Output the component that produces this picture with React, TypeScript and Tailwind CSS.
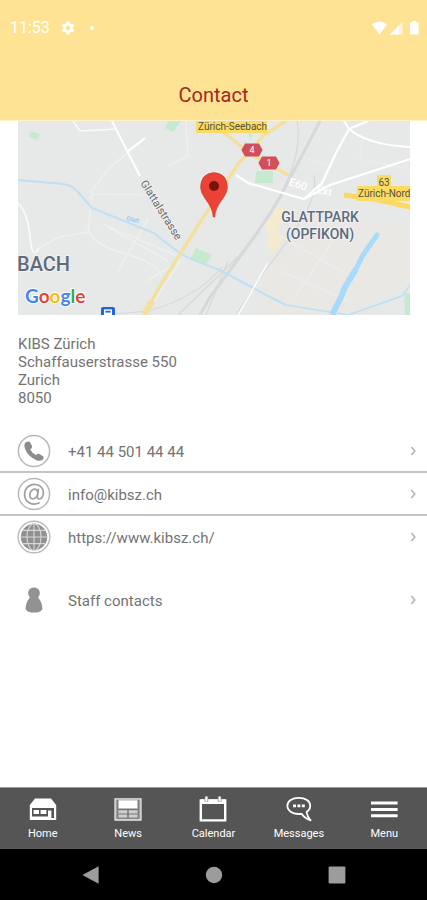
import type { ReactNode } from "react";
import { MdSettings } from "react-icons/md";

const contacts = [
  { label: "+41 44 501 44 44", href: "tel:+41445014444", icon: <PhoneIcon /> },
  { label: "info@kibsz.ch", href: "mailto:info@kibsz.ch", icon: <AtIcon /> },
  { label: "https://www.kibsz.ch/", href: "https://www.kibsz.ch/", icon: <GlobeIcon /> },
];

const tabs = [
  { label: "Home", icon: <HomeIcon /> },
  { label: "News", icon: <NewsIcon /> },
  { label: "Calendar", icon: <CalendarIcon /> },
  { label: "Messages", icon: <MessagesIcon /> },
  { label: "Menu", icon: <MenuIcon /> },
];

function PhoneIcon() {
  return (
    <svg viewBox="0 0 34 34" className="size-[34px]" aria-hidden="true">
      <circle cx="17" cy="17" r="15.6" fill="none" stroke="#b8b8b8" strokeWidth="1.5" />
      <path
        d="M8.4 8.6 11 7.4Q12.6 7.2 13.4 8.8L15 12Q15.4 13.4 14.4 14.4L13.2 15.6Q15 19 18.8 21L20.4 20Q21.4 19.4 22.4 20L26 22.2Q27 23 26.6 24.2L25.4 26Q23 27.4 20 26.4 11.4 23.2 8 14.8 6.6 10.8 8.4 8.6Z"
        fill="#8c8c8c"
      />
    </svg>
  );
}

function AtIcon() {
  return (
    <svg viewBox="0 0 34 34" className="size-[34px]" fill="none" aria-hidden="true">
      <circle cx="17" cy="17" r="15.6" stroke="#b8b8b8" strokeWidth="1.5" />
      <g stroke="#a0a0a0" strokeWidth="1.7" strokeLinecap="round">
        <path d="M22 26C15 29 7.6 25 7.6 17.4 7.6 11.4 12 7.4 17.6 7.4 23 7.4 26.4 11 26.4 15.6 26.4 19.6 24.4 22 22.4 22 20.6 22 20.2 20.8 20.4 19L21.4 12.4" />
        <path d="M20.8 15.6C20.6 13.4 19.4 12.2 17.6 12.2 14.8 12.2 12.8 15 12.8 18 12.8 20.4 14 21.8 15.8 21.8 18 21.8 20 19.8 20.4 18" />
      </g>
    </svg>
  );
}

function GlobeIcon() {
  return (
    <svg viewBox="0 0 34 34" className="size-[34px]" fill="none" aria-hidden="true">
      <circle cx="17" cy="17" r="15.8" stroke="#bcbcbc" strokeWidth="1.5" />
      <circle cx="17" cy="17" r="13.2" fill="#909090" />
      <g stroke="#d8d8d8" strokeWidth="1.1">
        <path d="M17 3.5V30.5M3.5 17H30.5M5.6 10.4H28.4M5.6 23.6H28.4" />
        <ellipse cx="17" cy="17" rx="7" ry="13.4" />
      </g>
    </svg>
  );
}

function PersonIcon() {
  return (
    <svg viewBox="0 0 34 34" className="size-[34px]" fill="#929292" aria-hidden="true">
      <path d="M17 4.6C20.4 4.6 22.8 7 22.8 10 22.8 12 22 13.4 20.8 14.6 23.4 16.6 25.2 21 25.4 25.4 25.4 28.2 21 29.6 17 29.6 13 29.6 8.6 28.2 8.6 25.4 8.8 21 10.6 16.6 13.2 14.6 12 13.4 11.2 12 11.2 10 11.2 7 13.6 4.6 17 4.6Z" />
    </svg>
  );
}

function HomeIcon() {
  return (
    <svg viewBox="0 0 28 26" className="h-[26px] w-7" aria-hidden="true">
      <path d="M6 2.6H22L27.2 9V24H.8V9Z" fill="#fff" />
      <path d="M3 12H25V22H22.4V14.4H19V20.6H3Z" fill="#555" />
      <path d="M4.6 14H10V18H4.6ZM11.6 14H17.4V18H11.6Z" fill="#fff" />
    </svg>
  );
}

function NewsIcon() {
  return (
    <svg viewBox="0 0 28 26" className="h-[26px] w-7" aria-hidden="true">
      <path d="M1 2.8H27V24H1Z" fill="#a0a0a0" stroke="#e6e6e6" strokeWidth="1.3" />
      <path d="M4.4 4.4H23.6V12.4H4.4Z" fill="#fff" />
      <path d="M4.4 14.6H13V21.8H4.4ZM15 14.6H23.6V21.8H15Z" fill="#cfcfcf" />
      <path d="M3.8 3.8V22.2H24.2V3.8M3.8 13.4H24.2M14 13.4V22.2M4.4 18H23.6" fill="none" stroke="#747474" />
    </svg>
  );
}

function CalendarIcon() {
  return (
    <svg viewBox="0 0 28 26" className="h-[26px] w-7" fill="none" aria-hidden="true">
      <path d="M1.8 4.4H26.2V24.4H1.8Z" stroke="#fff" strokeWidth="2.4" />
      <path d="M2 3.4H26V8H2Z" fill="#fff" />
      <path d="M7.4 .4V5.6M20.6 .4V5.6" stroke="#777" strokeWidth="3.6" />
      <path d="M7.4 .6V5.2M20.6 .6V5.2" stroke="#fff" strokeWidth="2.2" />
    </svg>
  );
}

function MessagesIcon() {
  return (
    <svg viewBox="0 0 28 26" className="h-[26px] w-7" fill="none" aria-hidden="true">
      <path
        d="M13.8 1.8C20.4 1.8 25.2 5 25.2 9.8 25.2 12.4 23.8 14.6 21.6 16 22 19.2 23.4 21.8 25.6 24.4 21.6 23.2 18.6 20.8 16.6 17.8 8.4 18.8 2.4 15.2 2.4 9.8 2.4 5 7.2 1.8 13.8 1.8Z"
        stroke="#fff"
        strokeWidth="1.8"
        strokeLinejoin="round"
      />
      <path d="M8 8.4H11V11.2H8ZM12.4 8.4H15.4V11.2H12.4ZM16.8 8.4H19.8V11.2H16.8Z" fill="#fff" />
    </svg>
  );
}

function MenuIcon() {
  return (
    <svg viewBox="0 0 28 26" className="h-[26px] w-7" aria-hidden="true">
      <path d="M1 7H27.6M1 13.4H27.6M1 19.8H27.6" stroke="#fff" strokeWidth="3" />
    </svg>
  );
}

function Chevron() {
  return (
    <svg viewBox="0 0 8 12" className="h-3 w-2" fill="none" aria-hidden="true">
      <path d="M2.4 2 5.8 6 2.4 10" stroke="#b0b0b0" strokeWidth="1.5" />
    </svg>
  );
}

function StatusBar() {
  return (
    <div className="flex h-14 items-center pl-2.5 pr-2 text-white">
      <span className="text-base">11:53</span>
      <MdSettings className="ml-2.5 size-4" aria-hidden="true" />
      <span className="ml-3.5 size-1 rounded-full bg-white" />
      <svg viewBox="0 0 48 14" className="ml-auto h-3.5 w-12" fill="#fff" aria-hidden="true">
        <path d="M1 3.4Q8.500-2.600 16 3.4L8.500 13.6Z" />
        <path d="M19 13.6 31.600.6V13.6Z" opacity=".6" />
        <path d="M19 13.6 28 4.4V13.6Z" />
        <path d="M41.4 0H45V1.4H47.6V13.6H39V1.4H41.4Z" />
      </svg>
    </div>
  );
}

function Shield({ x, y, label }: { x: number; y: number; label: string }) {
  return (
    <g transform={`translate(${x} ${y})`}>
      <path d="M-7-6.400H7L10.600 0 7 6.400H-7L-10.600 0Z" fill="#d0505a" />
      <text y="3.400" textAnchor="middle" fontSize="9" fill="#fff">
        {label}
      </text>
    </g>
  );
}

function ContactMap() {
  return (
    <svg viewBox="0 0 392 194" className="block w-full" role="img" aria-label="Map of KIBS Zürich" fontFamily="Roboto, sans-serif">
      <rect width="392" height="194" fill="#e7e8e8" />
      {/* built-up areas and parks */}
      <path d="M259 90 392 104V160L330 194H240L252 130Z" fill="#e9e8e5" />
      <path d="M259 84 266 88 264 98 258 110 265 118 256 132 248 124 252 112 246 104 254 96Z" fill="#f4ebcf" />
      <path d="M12 10 22 13 19 19 11 16ZM150 0H163L155 11 147 7ZM238 50H255V62H237ZM178 127 194 134 188 143 172 138ZM230 12 235 14 232 19ZM386 172H392V194H387Z" fill="#c6ead0" />
      {/* minor streets */}
      <g fill="none" stroke="#f0f1f1" strokeWidth="1.2">
        <path d="M72 72 92 46 125 20M0 82Q10 92 12 116T21 127L41 116 70 111 74 73 130 74M72 111Q76 124 108 133T143 156M85 103 157 134M130 98 100 150M128 160 162 140 130 190M92 107 150 140M168 0 170 35 150 45" />
        <path d="M262 150 330 180M262 115 340 160M277 176 316 118M345 15 342 38 392 48M285 36 308 44" opacity=".6" />
        <path d="M55 0 62 10 99 8M0 82Q10 92 12 116T21 127" stroke="#fafafa" strokeWidth="1.6" />
      </g>
      {/* railway */}
      <g fill="none" stroke="#d6d8d9" strokeWidth="3">
        <path d="M302 0Q276 50 262 76T192 176L182 194" />
        <path d="M279 0Q284 25 270 58T220 136L160 194M296 54Q300 72 284 98T248 148L218 194" strokeWidth="1.2" />
        <path d="M204 146Q180 176 130 190L85 194M210 140 188 194" strokeWidth="1.2" />
      </g>
      {/* water */}
      <g fill="none" stroke="#bfdff5" strokeWidth="2">
        <path d="M0 59 45 63Q54 64 60 71L74 87 136 112Q158 130 167 135T202 149L250 175 268 184" />
        <path d="M268 184 330 194 384 175 392 164" strokeWidth="1.6" />
        <path d="M359 114 345 134 338 148" stroke="#a8daFB" strokeWidth="5" strokeLinecap="round" />
        <path d="M338 148 327 166 323 176 314 194" stroke="#a8dafb" strokeWidth="6" />
      </g>
      {/* main roads */}
      <g fill="none" stroke="#fff">
        <path d="M94 0Q104 20 122 55M110 30 127 17" strokeWidth="2" />
        <path d="M218 54 230 62 286 78 312 64 392 38M286 78 304 62 318 32 331 8 326 0M331 8Q350 24 392 26M331 8 350 0" strokeWidth="2.2" />
        <path d="M250 142 220 194" strokeWidth="1.4" />
      </g>
      <g fill="none" stroke="#f4e09c">
        <path d="M126 194 142 165 167 125 192 86 220 43 246 14 268 0M204 10 234 34 270 54" strokeWidth="3.4" />
        <path d="M126 194 134 180" strokeWidth="6" />
        <path d="M326 74 356 78 392 86" stroke="#fbd95f" strokeWidth="5" />
      </g>
      <g fontSize="11" fill="#fff" fontWeight="500">
        <text transform="translate(270 64) rotate(18)">E60</text>
        <text transform="translate(298 72) rotate(12)">Ext</text>
      </g>
      <path d="M178-1H249V12H178ZM359 54H373V66H359ZM339 65H392V80H339Z" fill="#fadc64" />
      <g fontSize="10" fill="#55503a">
        <text x="180" y="9">Zürich-Seebach</text>
        <text x="366" y="65" textAnchor="middle">63</text>
        <text x="340" y="76">Zürich-Nord</text>
      </g>
      <Shield x={234} y={29} label="4" />
      <Shield x={251} y={42} label="1" />
      <text transform="translate(122 62) rotate(58)" fontSize="11" fill="#66696c" stroke="#f0f0f0" strokeWidth="2" paintOrder="stroke">
        Glattalstrasse
      </text>
      <g fill="#5f6b7d" fontWeight="500" stroke="#f2f2f2" strokeWidth="2" paintOrder="stroke">
        <text x="-1" y="150" fontSize="20">BACH</text>
        <g fontSize="14" textAnchor="middle">
          <text x="302" y="101">GLATTPARK</text>
          <text x="302" y="118">(OPFIKON)</text>
        </g>
      </g>
      <text x="108" y="99" transform="rotate(14 108 99)" fontSize="6" fill="#7cbdf0">
        Glatt
      </text>
      <text x="7" y="182" fontSize="19" fontWeight="700" stroke="#fff" strokeWidth="2" paintOrder="stroke" fontFamily="Lato, sans-serif">
        <tspan fill="#4285f4">G</tspan>
        <tspan fill="#ea4335">o</tspan>
        <tspan fill="#fbbc05">o</tspan>
        <tspan fill="#4285f4">g</tspan>
        <tspan fill="#34a853">l</tspan>
        <tspan fill="#ea4335">e</tspan>
      </text>
      {/* train stop */}
      <rect x="83" y="186" width="14" height="12" rx="2" fill="#2265d8" />
      <path d="M86 188.400H94V194H86Z" fill="#fff" />
      <path d="M87.400 189.800H92.600V191.600H87.400Z" fill="#2265d8" />
      {/* pin */}
      <path d="M196 51.6Q209 52.6 209.4 66C209 77 197.5 82 196.8 96H195.2C194.5 82 183 77 182.6 66Q183 52.6 196 51.6Z" fill="#ea4335" stroke="#c5352b" strokeWidth=".6" />
      <circle cx="196" cy="65" r="5" fill="#7a120d" />
    </svg>
  );
}

function ContactRow({ href, icon, children }: { href: string; icon: ReactNode; children: ReactNode }) {
  return (
    <a href={href} className="flex h-[41px] items-center pl-[17px] pr-2.5">
      {icon}
      <span className="ml-[17px] flex-1 pt-[3px] text-[15px]">{children}</span>
      <Chevron />
    </a>
  );
}

export default function App() {
  return (
    <div className="flex min-h-screen flex-col bg-white font-[Roboto,sans-serif] text-[#737373]">
      <header className="h-[121px] border-b border-[#fff1ca] bg-[#ffe395]">
        <StatusBar />
        <h1 className="mt-6 text-center text-xl leading-[30px] text-[#a5281b]">Contact</h1>
      </header>

      <main className="flex-1">
        <div className="pl-[18px] pr-[17px]">
          <ContactMap />
          <address className="mt-5 text-[15px] leading-[18px] not-italic">
            KIBS Zürich
            <br />
            Schaffauserstrasse 550
            <br />
            Zurich
            <br />
            8050
          </address>
        </div>

        <ul className="mt-[23px] divide-y-2 divide-[#c4c4c4]">
          {contacts.map((c) => (
            <li key={c.label}>
              <ContactRow href={c.href} icon={c.icon}>
                {c.label}
              </ContactRow>
            </li>
          ))}
        </ul>

        <div className="mt-[22px]">
          <ContactRow href="#staff" icon={<PersonIcon />}>
            Staff contacts
          </ContactRow>
        </div>
      </main>

      <nav className="grid h-[62px] grid-cols-5 border-t border-[#999] bg-[#555] text-white">
        {tabs.map((tab) => (
          <button key={tab.label} type="button" className="flex flex-col items-center pt-2">
            {tab.icon}
            <span className="mt-1 text-[11px] leading-4">{tab.label}</span>
          </button>
        ))}
      </nav>

      {/* Android navigation */}
      <div className="flex h-[51px] items-center justify-center gap-[105px] bg-black">
        <button type="button" aria-label="Back">
          <svg viewBox="0 0 18 18" className="size-[18px]" fill="#9c9c9c">
            <path d="M.4 9 16.6.2V17.8Z" />
          </svg>
        </button>
        <button type="button" aria-label="Home screen">
          <svg viewBox="0 0 18 18" className="size-[18px]" fill="#9c9c9c">
            <circle cx="9" cy="9" r="8.2" />
          </svg>
        </button>
        <button type="button" aria-label="Recent apps">
          <svg viewBox="0 0 18 18" className="size-[18px]" fill="#9c9c9c">
            <rect x=".6" y=".6" width="16.8" height="16.8" rx="1" />
          </svg>
        </button>
      </div>
    </div>
  );
}
